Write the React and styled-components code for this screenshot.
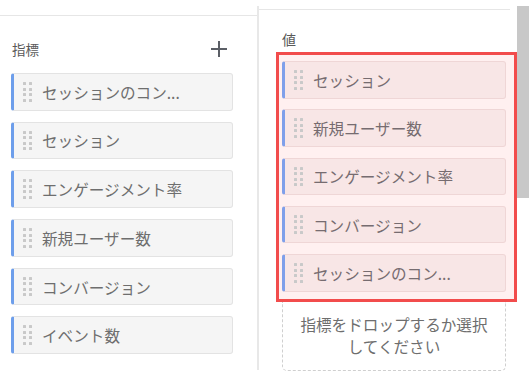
import React from 'react'
import styled, { createGlobalStyle } from 'styled-components'

const GlobalStyle = createGlobalStyle`
    html, body {
        margin: 0;
        padding: 0;
        background: #fff;
        overflow: hidden;
    }
    body {
        font-family: "Noto Sans CJK JP", "Noto Sans", sans-serif;
    }
`

const metrics = [
    'セッションのコン...',
    'セッション',
    'エンゲージメント率',
    '新規ユーザー数',
    'コンバージョン',
    'イベント数',
]

const values = [
    'セッション',
    '新規ユーザー数',
    'エンゲージメント率',
    'コンバージョン',
    'セッションのコン...',
]

const Grip = () => (
    <GripBox>
        {Array(8).fill().map((_, i) => <span key={i} />)}
    </GripBox>
)

const PlusIcon = () => (
    <svg width="18" height="18" viewBox="0 0 18 18">
        <path d="M9 1v16M1 9h16" stroke="#5b5f66" strokeWidth="2" fill="none" />
    </svg>
)

const App = () => {
    return (
        <Page>
            <GlobalStyle />
            <LeftPanel>
                <Header>
                    <Label>指標</Label>
                    <AddButton><PlusIcon /></AddButton>
                </Header>
                <List>
                    {metrics.map((m) => (
                        <Chip key={m}>
                            <Grip />
                            <span>{m}</span>
                        </Chip>
                    ))}
                </List>
            </LeftPanel>
            <RightPanel>
                <RightInner>
                    <ValueLabel>値</ValueLabel>
                    <ValueList>
                        {values.map((v) => (
                            <Chip key={v} $active>
                                <Grip />
                                <span>{v}</span>
                            </Chip>
                        ))}
                    </ValueList>
                    <DropZone>指標をドロップするか選択<br />してください</DropZone>
                </RightInner>
            </RightPanel>
            <Scrollbar />
        </Page>
    )
}

export default App

const Page = styled.div`
    display: flex;
    align-items: flex-start;
    width: 529px;
    height: 384px;
    background: #fff;
`

const LeftPanel = styled.div`
    width: 257px;
    margin-top: 15px;
    border-top: 1px solid #e6e6e6;
    box-sizing: border-box;
`

const Header = styled.div`
    display: flex;
    align-items: center;
    justify-content: space-between;
    height: 20px;
    padding: 23px 29px 0 12px;
    margin-bottom: 14px;
`

const Label = styled.div`
    font-size: 13.5px;
    color: #5a5a5a;
`

const AddButton = styled.div`
    display: flex;
    width: 18px;
    height: 18px;
`

const List = styled.div`
    display: flex;
    flex-direction: column;
    gap: 11.2px;
    padding: 0 24px 0 11px;
`

const Chip = styled.div`
    display: flex;
    align-items: center;
    gap: 10px;
    height: 37.5px;
    box-sizing: border-box;
    padding-left: 9px;
    border: 1px solid ${p => p.$active ? '#efd6d6' : '#e3e3e3'};
    border-left: 3px solid ${p => p.$active ? '#7f9fea' : '#6d9eeb'};
    border-radius: 3px;
    background: ${p => p.$active ? '#f8e6e6' : '#f5f5f5'};
    color: ${p => p.$active ? '#766c70' : '#6e6e6e'};
    font-size: 15.6px;
    white-space: nowrap;
    overflow: hidden;
`

const GripBox = styled.div`
    display: grid;
    grid-template-columns: 3px 3px;
    grid-auto-rows: 3px;
    column-gap: 3px;
    row-gap: 2.5px;
    flex-shrink: 0;
    span {
        background: #c9c9c9;
        border-radius: 0.5px;
    }
`

const RightPanel = styled.div`
    width: 260px;
    height: 364px;
    margin-top: 6px;
    border-left: 2px solid #e8e8e8;
    box-sizing: border-box;
`

const RightInner = styled.div`
    margin: 3px 7px 0 0;
    border-top: 1px solid #e6e6e6;
`

const ValueLabel = styled.div`
    font-size: 14px;
    color: #5a5a5a;
    padding: 19px 0 0 23px;
    height: 20px;
    margin-bottom: 3px;
`

const ValueList = styled.div`
    display: flex;
    flex-direction: column;
    gap: 10.8px;
    margin: 0 -7px 0 17px;
    padding: 6px 8px 7px 3px;
    border: 3px solid #f24c4c;
    background: #fff0f0;
`

const DropZone = styled.div`
    margin: 0 4px 0 23px;
    height: 69px;
    box-sizing: border-box;
    border: 1px dashed #cfcfcf;
    border-top: none;
    border-radius: 0 0 5px 5px;
    display: flex;
    align-items: center;
    justify-content: center;
    text-align: center;
    font-size: 15.6px;
    line-height: 22px;
    color: #6e6e6e;
    padding-bottom: 2px;
`

const Scrollbar = styled.div`
    width: 12px;
    height: 192px;
    margin-top: 6px;
    background: #c8c8c8;
`
